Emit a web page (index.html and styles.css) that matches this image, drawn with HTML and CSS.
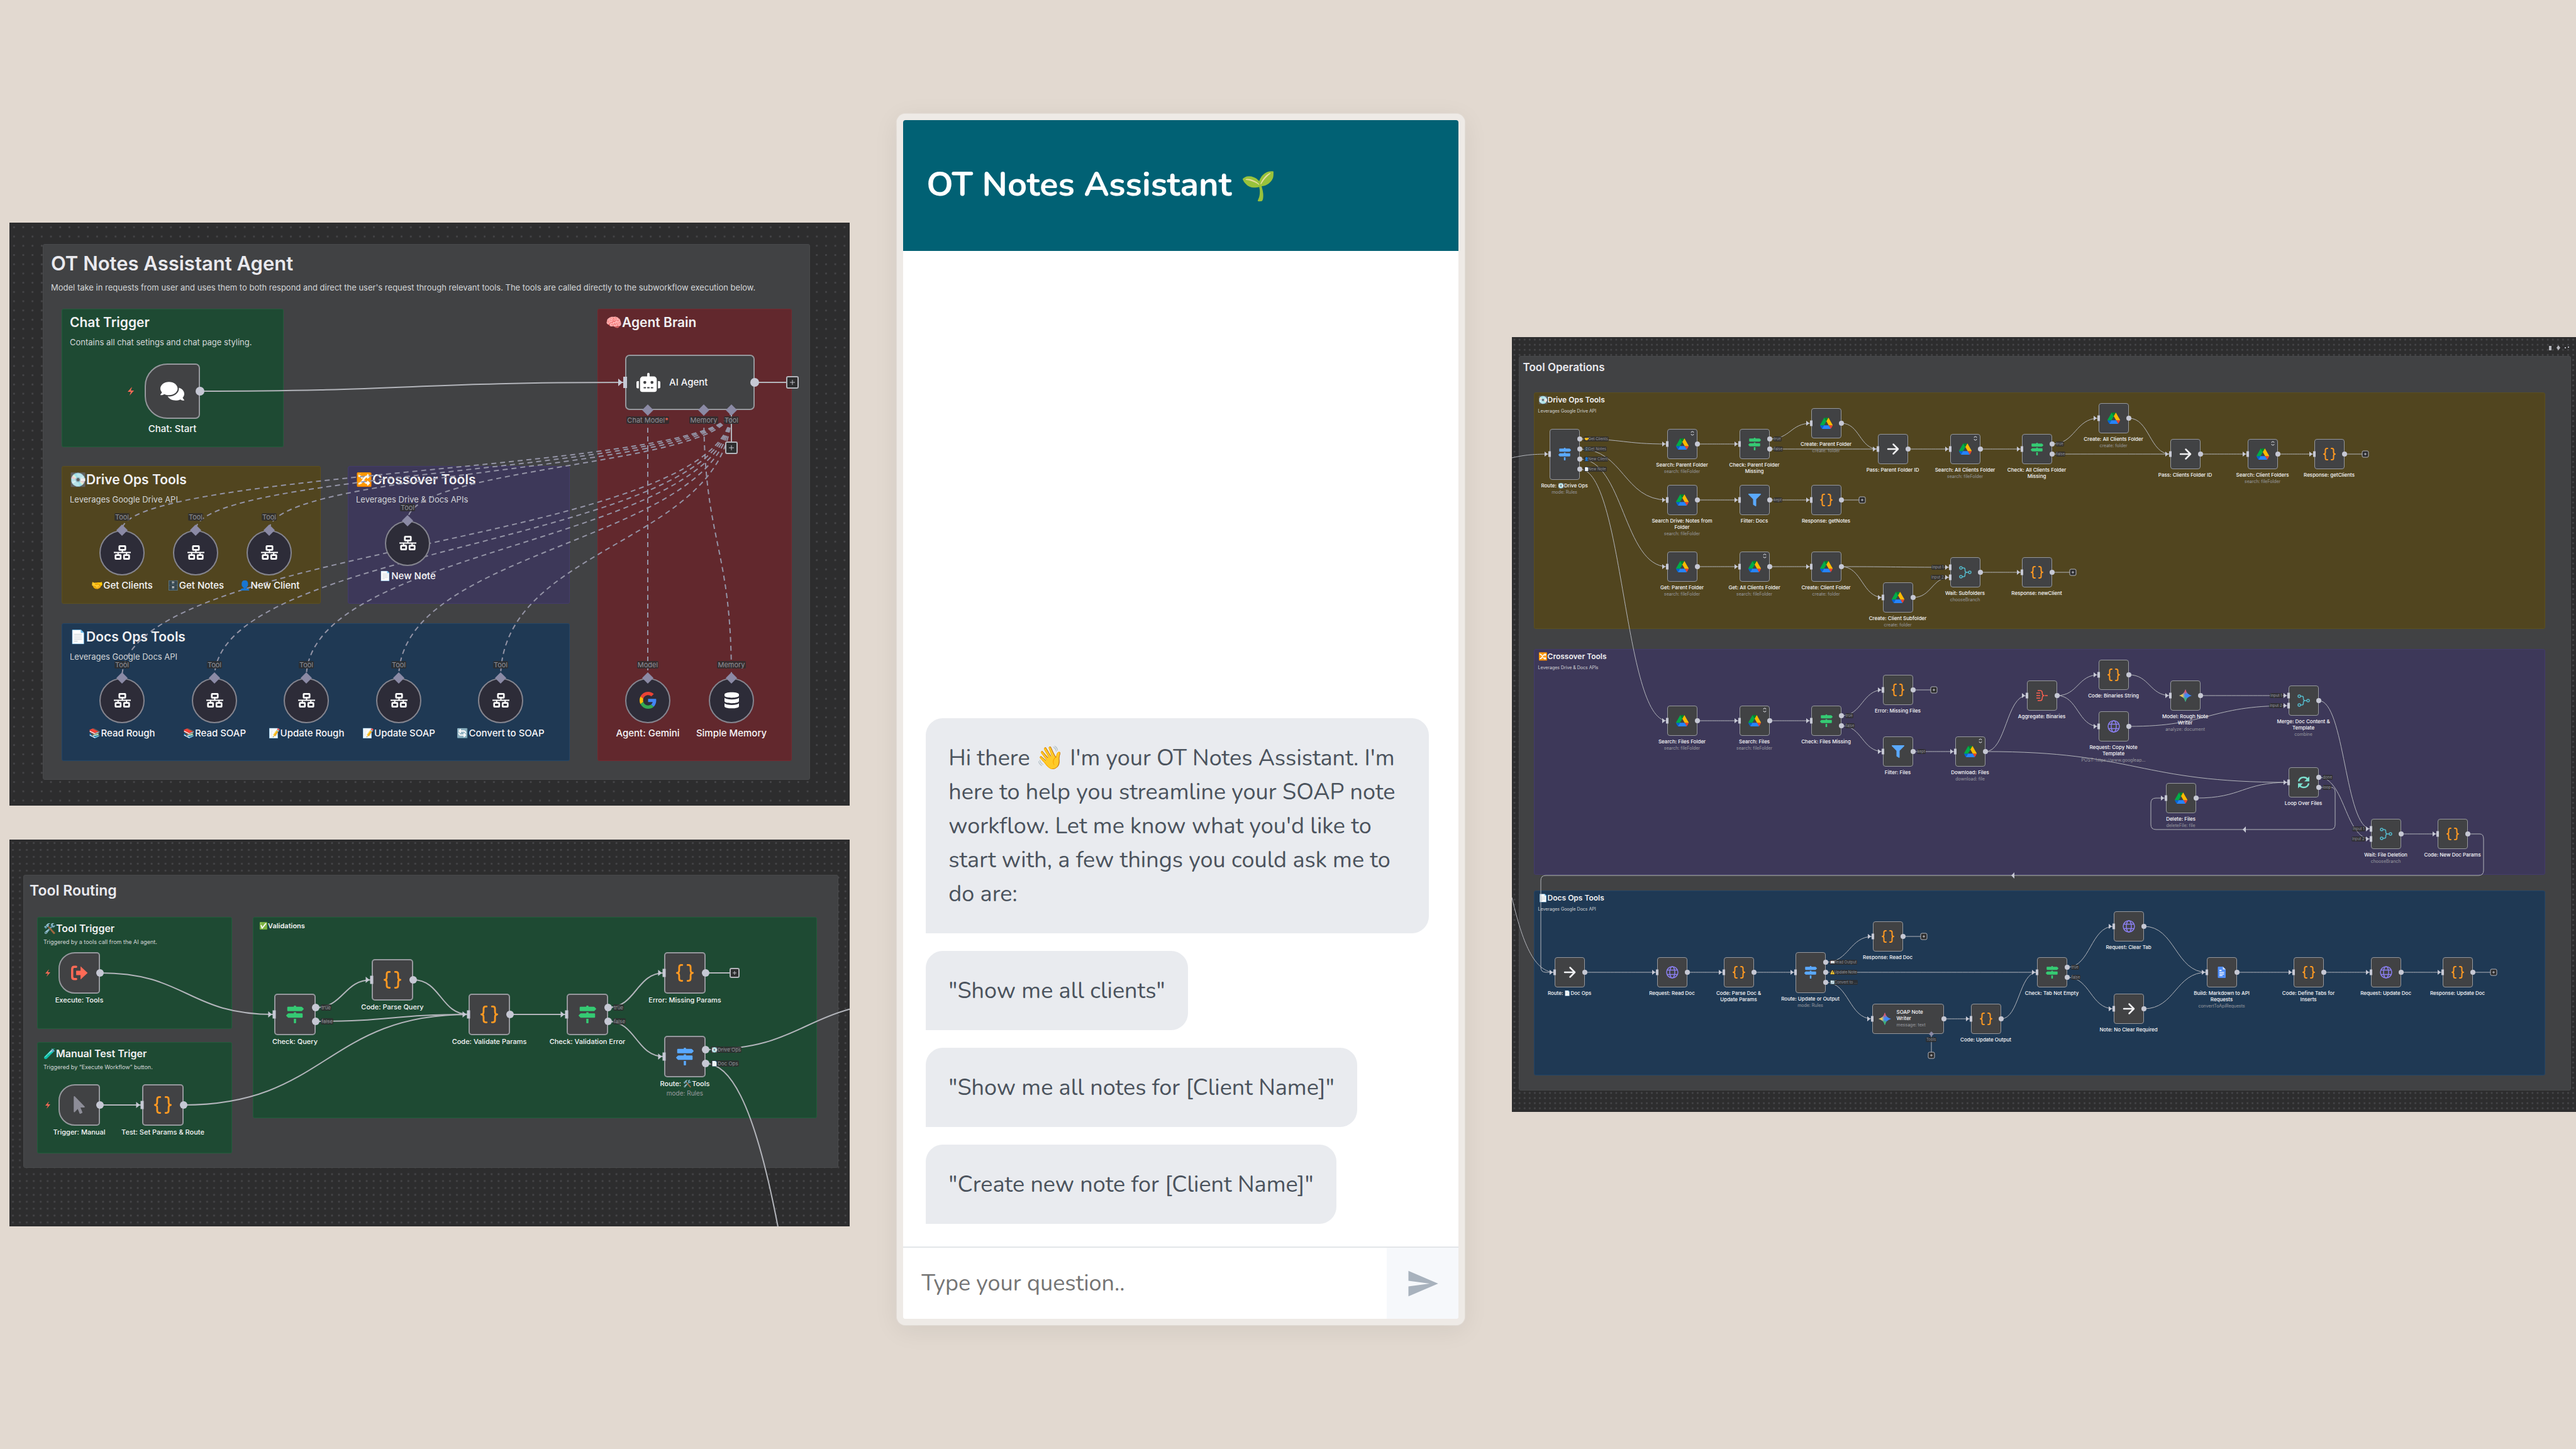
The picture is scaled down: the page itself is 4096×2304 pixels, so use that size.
FILE: index.html
```html
<!DOCTYPE html>
<html lang="en">
<head>
<meta charset="utf-8">
<meta name="viewport" content="width=device-width, initial-scale=1">
<title>OT Notes Assistant</title>
<link rel="stylesheet" href="styles.css">
</head>
<body>
<svg class="sprite" aria-hidden="true">
  <defs>
    <radialGradient id="g-red" gradientUnits="userSpaceOnUse" cx="17" cy="0" r="18"><stop offset=".4" stop-color="#f0525a"/><stop offset="1" stop-color="#f0525a" stop-opacity="0"/></radialGradient>
    <radialGradient id="g-yellow" gradientUnits="userSpaceOnUse" cx="0" cy="20" r="19"><stop offset=".5" stop-color="#f6c945"/><stop offset="1" stop-color="#f6c945" stop-opacity="0"/></radialGradient>
    <radialGradient id="g-green" gradientUnits="userSpaceOnUse" cx="17" cy="40" r="18"><stop offset=".5" stop-color="#3fb668"/><stop offset="1" stop-color="#3fb668" stop-opacity="0"/></radialGradient>
  </defs>
  <symbol id="i-drive" viewBox="0 -4 87 86">
    <path d="m6.6 66.85 3.85 6.65c.8 1.4 1.95 2.5 3.3 3.3l13.75-23.8h-27.5c0 1.55.4 3.1 1.2 4.5z" fill="#0066da"/>
    <path d="m43.65 25-13.75-23.8c-1.35.8-2.5 1.9-3.3 3.3l-25.4 44a9.06 9.06 0 0 0-1.2 4.5h27.5z" fill="#00ac47"/>
    <path d="m73.55 76.8c1.35-.8 2.5-1.9 3.3-3.3l1.6-2.75 7.65-13.25c.8-1.4 1.2-2.95 1.2-4.5h-27.5l5.85 11.5z" fill="#ea4335"/>
    <path d="m43.65 25 13.75-23.8c-1.35-.8-2.9-1.2-4.5-1.2h-18.5c-1.6 0-3.15.45-4.5 1.2z" fill="#00832d"/>
    <path d="m59.8 53h-32.3l-13.75 23.8c1.35.8 2.9 1.2 4.5 1.2h50.8c1.6 0 3.15-.45 4.5-1.2z" fill="#2684fc"/>
    <path d="m73.4 26.5-12.7-22c-.8-1.4-1.95-2.5-3.3-3.3l-13.75 23.8 16.15 28h27.45c0-1.55-.4-3.1-1.2-4.5z" fill="#ffba00"/>
  </symbol>
  <symbol id="i-signs" viewBox="0 0 512 512"><path fill="currentColor" d="M507.31 84.69L464 41.37c-6-6-14.14-9.37-22.63-9.37H288V16c0-8.84-7.16-16-16-16h-32c-8.84 0-16 7.16-16 16v16H56c-13.25 0-24 10.75-24 24v80c0 13.25 10.75 24 24 24h385.37c8.49 0 16.62-3.37 22.63-9.37l43.31-43.31c6.25-6.26 6.25-16.38 0-22.63zM224 496c0 8.84 7.16 16 16 16h32c8.84 0 16-7.16 16-16V384h-64v112zm232-272H288v-32h-64v32H70.63c-8.49 0-16.62 3.37-22.63 9.37L4.69 276.69c-6.25 6.25-6.25 16.38 0 22.63L48 342.63c6 6 14.14 9.37 22.63 9.37H456c13.25 0 24-10.75 24-24v-80c0-13.25-10.75-24-24-24z"/></symbol>
  <symbol id="i-filter" viewBox="0 0 512 512"><path fill="#5aa9ff" d="M487.976 0H24.028C2.71 0-8.047 25.866 7.058 40.971L192 225.941V432c0 7.831 3.821 15.17 10.237 19.662l80 55.98C298.02 518.69 320 507.493 320 487.98V225.941l184.947-184.97C520.021 25.896 509.338 0 487.976 0z"/></symbol>
  <symbol id="i-code" viewBox="0 0 40 40"><path fill="none" stroke="#ff9922" stroke-width="4" stroke-linecap="round" stroke-linejoin="round" d="M14 2h-2q-5 0-5 5v7q0 6-5 6 5 0 5 6v7q0 5 5 5h2M26 2h2q5 0 5 5v7q0 6 5 6-5 0-5 6v7q0 5-5 5h-2"/></symbol>
  <symbol id="i-arrow" viewBox="0 0 40 40"><path fill="none" stroke="#f2f2f4" stroke-width="5" stroke-linecap="round" stroke-linejoin="round" d="M4 20h31M21 5l15 15-15 15"/></symbol>
  <symbol id="i-merge" viewBox="0 0 40 40"><g fill="none" stroke="#54b8c9" stroke-width="3"><circle cx="6" cy="6" r="4"/><circle cx="6" cy="34" r="4"/><circle cx="34" cy="20" r="4"/><path d="M10 6h4q5 0 5 5v3q0 6 6 6h5M10 34h4q5 0 5-5v-3q0-6 6-6"/></g></symbol>
  <symbol id="i-globe" viewBox="0 0 40 40"><g fill="none" stroke="#8a7ff0" stroke-width="3"><circle cx="20" cy="20" r="18"/><ellipse cx="20" cy="20" rx="8" ry="18"/><path d="M4 13h32M4 27h32"/></g></symbol>
  <symbol id="i-gemini" viewBox="0 0 40 40"><path fill="#4187f5" d="M20 0Q24 16 40 20 24 24 20 40 16 24 0 20 16 16 20 0Z"/><path fill="url(#g-red)" d="M20 0Q24 16 40 20 24 24 20 40 16 24 0 20 16 16 20 0Z"/><path fill="url(#g-green)" d="M20 0Q24 16 40 20 24 24 20 40 16 24 0 20 16 16 20 0Z"/><path fill="url(#g-yellow)" d="M20 0Q24 16 40 20 24 24 20 40 16 24 0 20 16 16 20 0Z"/></symbol>
  <symbol id="i-docs" viewBox="0 0 40 40"><path fill="#4f8df7" d="M9 2h14l9 9v25q0 2-2 2H9q-2 0-2-2V4q0-2 2-2z"/><path fill="#cfe0ff" d="M23 2l9 9h-9z"/><path fill="#e8f0ff" d="M12 12h7v4h-7zM12 19h15v3H12zM12 24h15v3H12zM12 29h10v3H12z"/></symbol>
  <symbol id="i-aggregate" viewBox="0 0 40 40"><path fill="none" stroke="#ff6150" stroke-width="3" stroke-linejoin="round" d="M6 4h9q4 0 5 4l1 7q1 5 5 5-4 0-5 5l-1 7q-1 4-5 4H6M2 12h12M2 20h12M2 28h12M29 20h9"/></symbol>
  <symbol id="i-loop" viewBox="0 0 40 40"><path fill="none" stroke="#7de0cf" stroke-width="5" d="M4 17C6 8 13 4 20 4q8 0 13 6M36 23c-2 9-9 13-16 13q-8 0-13-6"/><path fill="#7de0cf" d="M38 1v16H22zM2 39V23h16z"/></symbol>
  <symbol id="i-exit" viewBox="0 0 40 40"><path fill="none" stroke="#ff6a56" stroke-width="5" stroke-linecap="round" d="M13 6h-4q-5 0-5 5v18q0 5 5 5h4"/><path fill="#ff6a56" d="M13 15h10V5l16 15-16 15V25H13z"/></symbol>
  <symbol id="i-pointer" viewBox="-96 0 512 512"><path fill="#8d8d98" d="M302.189 329.126H196.105l55.831 135.993c3.889 9.428-.555 19.999-9.444 23.999l-49.165 21.427c-9.165 4-19.443-.571-23.332-9.714l-53.053-129.136-86.664 89.138C18.729 472.71 0 463.554 0 447.977V18.299C0 1.899 19.921-6.096 30.277 5.443l284.412 292.542c11.472 11.179 3.007 31.141-12.5 31.141z"/></symbol>
  <symbol id="i-chat" viewBox="0 -32 576 576"><path fill="#fff" d="M416 192c0-88.4-93.1-160-208-160S0 103.6 0 192c0 34.3 14.1 65.9 38 92-13.4 30.2-35.5 54.2-35.8 54.5-2.2 2.3-2.8 5.7-1.5 8.7S4.8 352 8 352c36.6 0 66.9-12.3 88.7-25 32.2 15.7 70.3 25 111.3 25 114.9 0 208-71.6 208-160zm122 220c23.9-26 38-57.7 38-92 0-66.9-53.5-124.2-129.3-148.1.9 6.6 1.3 13.3 1.3 20.1 0 105.9-107.7 192-240 192-10.8 0-21.3-.8-31.7-1.9C207.8 439.6 281.8 480 368 480c41 0 79.1-9.2 111.3-25 21.8 12.7 52.1 25 88.7 25 3.2 0 6.1-1.9 7.3-4.8 1.3-2.9.7-6.3-1.5-8.7-.3-.3-22.4-24.2-35.8-54.5z"/></symbol>
  <symbol id="i-robot" viewBox="0 -32 640 576"><path fill="#fff" d="M32,224H64V416H32A32,32,0,0,1,0,384V256A32,32,0,0,1,32,224Zm512-48V448a64,64,0,0,1-64,64H160a64,64,0,0,1-64-64V176a80,80,0,0,1,80-80H288V32a32,32,0,0,1,64,0V96H464A80,80,0,0,1,544,176ZM264,256a40,40,0,1,0-40,40A40,40,0,0,0,264,256Zm-8,128H192v32h64Zm96,0H288v32h64ZM456,256a40,40,0,1,0-40,40A40,40,0,0,0,456,256Zm-8,128H384v32h64ZM640,256V384a32,32,0,0,1-32,32H576V224h32A32,32,0,0,1,640,256Z"/></symbol>
  <symbol id="i-tool" viewBox="0 0 40 40"><g fill="none" stroke="#fff" stroke-width="4"><rect x="13" y="5" width="14" height="9" rx="1"/><rect x="4" y="26" width="12" height="9" rx="1"/><rect x="24" y="26" width="12" height="9" rx="1"/><path stroke-width="3" d="M0 20h40M20 14v6M10 20v6M30 20v6"/></g></symbol>
  <symbol id="i-google" viewBox="0 0 48 48"><path fill="#EA4335" d="M24 9.5c3.54 0 6.71 1.22 9.21 3.6l6.85-6.85C35.9 2.38 30.47 0 24 0 14.62 0 6.51 5.38 2.56 13.22l7.98 6.19C12.43 13.72 17.74 9.5 24 9.5z"/><path fill="#4285F4" d="M46.98 24.55c0-1.57-.15-3.09-.38-4.55H24v9.02h12.94c-.58 2.96-2.26 5.48-4.78 7.18l7.73 6c4.51-4.18 7.09-10.36 7.09-17.65z"/><path fill="#FBBC05" d="M10.53 28.59c-.48-1.45-.76-2.99-.76-4.59s.27-3.14.76-4.59l-7.98-6.19C.92 16.46 0 20.12 0 24c0 3.88.92 7.54 2.56 10.78l7.97-6.19z"/><path fill="#34A853" d="M24 48c6.48 0 11.93-2.13 15.89-5.81l-7.73-6c-2.15 1.45-4.92 2.3-8.16 2.3-6.26 0-11.57-4.22-13.47-9.91l-7.98 6.19C6.51 42.62 14.62 48 24 48z"/></symbol>
  <symbol id="i-db" viewBox="0 0 40 40"><path fill="#fff" d="M20 1c10 0 17 2 17 5v3c0 3-7 5-17 5S3 12 3 9V6c0-3 7-5 17-5zM3 14c3 3 9 4 17 4s14-1 17-4v8c0 3-7 5-17 5S3 25 3 22zM3 27c3 3 9 4 17 4s14-1 17-4v7c0 3-7 5-17 5S3 37 3 34z"/></symbol>
</svg>

<main class="board">
  <div class="stack">
    <section class="canvas canvas-agent" id="agent" aria-label="OT Notes Assistant Agent workflow"></section>
    <section class="canvas canvas-routing" id="routing" aria-label="Tool Routing workflow"></section>
  </div>

  <section class="chat" aria-label="Chat">
    <header class="chat-header"><h1>OT Notes Assistant <span class="emoji">🌱</span></h1></header>
    <div class="messages">
      <p class="bubble">Hi there 👋 I'm your OT Notes Assistant. I'm here to help you streamline your SOAP note workflow. Let me know what you'd like to start with, a few things you could ask me to do are:</p>
      <p class="bubble">"Show me all clients"</p>
      <p class="bubble">"Show me all notes for [Client Name]"</p>
      <p class="bubble">"Create new note for [Client Name]"</p>
    </div>
    <form class="composer">
      <input type="text" placeholder="Type your question.." aria-label="Type your question">
      <button type="button" aria-label="Send"><svg viewBox="0 0 24 24"><path fill="currentColor" d="M2 21 23 12 2 3v7l15 2-15 2z"/></svg></button>
    </form>
  </section>

  <section class="canvas canvas-operations" id="operations" aria-label="Tool Operations workflow"></section>
</main>
<script src="workflow.js"></script>
</body>
</html>
```
FILE: styles.css
```css
* { box-sizing: border-box; }

body {
  margin: 0;
  min-height: 100vh;
  background: #e2d9d0;
  font-family: Inter, "Liberation Sans", sans-serif;
}

h1, h2, p { margin: 0; }

.sprite { position: absolute; width: 0; height: 0; }

.board {
  min-height: 100vh;
  display: grid;
  grid-template-columns: minmax(0, 1336fr) minmax(0, 902fr) minmax(0, 1692fr);
  gap: 75px;
  align-items: center;
  padding-left: 15px;
}

.stack { display: grid; gap: 54px; }

/* Workflow canvases */
.canvas {
  position: relative;
  overflow: hidden;
  background-color: #2d2d2e;
  background-image: radial-gradient(circle, #464649 1px, transparent 2px);
}

.canvas-agent {
  aspect-ratio: 1336 / 927;
  background-size: calc(100% / 91) calc(100% / 63);
  --title: 31px; --title-line: 40px; --title-top: 10px; --title-gap: 9px;
  --head: 21px; --head-line: 26px; --head-top: 8px; --head-gap: 9px;
  --note: 13px; --note-line: 18px; --inset: 12px;
  --name: 15px; --name-line: 20px; --name-gap: 6px;
  --sub: 13px; --sub-line: 16px;
  --port: 11px; --port-line: 12px;
  --radius: 7px; --round: 36px; --icon: 38px; --stroke: 2px;
}

.canvas-routing {
  aspect-ratio: 1336 / 615;
  background-size: calc(100% / 121) calc(100% / 56);
  --title: 23px; --title-line: 30px; --title-top: 9px; --title-gap: 6px;
  --head: 16px; --head-line: 20px; --head-top: 7px; --head-gap: 6px;
  --note: 9px; --note-line: 12px; --inset: 9px;
  --name: 11px; --name-line: 15px; --name-gap: 3px;
  --sub: 10px; --sub-line: 15px;
  --port: 8px; --port-line: 10px;
  --radius: 5px; --round: 26px; --icon: 28px; --stroke: 2px;
}

.canvas-operations {
  aspect-ratio: 1691 / 1231;
  background-size: calc(100% / 209) calc(100% / 152);
  --title: 17px; --title-line: 22px; --title-top: 6px; --title-gap: 4px;
  --head: 12px; --head-line: 14px; --head-top: 4px; --head-gap: 6px;
  --note: 7px; --note-line: 9px; --inset: 6px;
  --name: 8px; --name-line: 10px; --name-gap: 4px;
  --sub: 7px; --sub-line: 11px;
  --port: 6px; --port-line: 8px;
  --radius: 4px; --round: 20px; --icon: 20px; --stroke: 1px;
}

.sticky {
  position: absolute;
  padding: var(--head-top) var(--inset);
  border: 1px solid transparent;
  border-radius: 3px;
  color: #f0f0f2;
  white-space: nowrap;
}
.sticky h2 { font-size: var(--head); line-height: var(--head-line); font-weight: 600; }
.sticky p { margin-top: var(--head-gap); font-size: var(--note); line-height: var(--note-line); color: #d4d6d8; }
.sticky-main { padding-top: var(--title-top); background: #414244; border-color: #48494b; }
.sticky-main h2 { font-size: var(--title); line-height: var(--title-line); color: #e9e9ee; }
.sticky-main p { margin-top: var(--title-gap); }
.sticky-small h2 { font-size: 11px; line-height: 12px; }
.green { background: #1e4a33; border-color: #225c3b; }
.yellow { background: #51451f; border-color: #5c4f1d; }
.purple { background: #3d3859; border-color: #433b6c; }
.blue { background: #1f3954; border-color: #234567; }
.red { background: #62282d; border-color: #73292f; }

.layer { position: absolute; inset: 0; width: 100%; height: 100%; overflow: visible; pointer-events: none; }

.edge { fill: none; stroke: #b3b5bb; stroke-width: var(--stroke); }
.edge-dashed { stroke: #9494a6; stroke-dasharray: 8 6; }
.dot, .arrow, .slot { fill: #c6c8d4; }
.diamond { fill: #8b8aa5; }
.plus-box { fill: #2d2d2e; stroke: #b4b5bb; stroke-width: var(--stroke); }
.plus-mark { fill: none; stroke: #c2c3ca; stroke-width: 1px; }
.bolt { fill: #ff6a56; }
.mark { fill: #b4b5bb; }

.node {
  position: absolute;
  display: flex;
  flex-direction: column;
  align-items: center;
  text-align: center;
  white-space: nowrap;
  color: #f6f6f8;
}
.node-box {
  position: relative;
  flex: none;
  display: flex;
  align-items: center;
  justify-content: center;
  background: #414244;
  border: var(--stroke) solid #96989d;
  border-radius: var(--radius);
}
.node-box svg { width: var(--icon); height: var(--icon); flex: none; }
.node-box .badge { position: absolute; top: 2px; right: 3px; width: 8px; height: 8px; }
.node-trigger .node-box { border-radius: var(--round) var(--radius) var(--radius) var(--round); }
.node-tool .node-box { border-radius: 50%; background: #2d2c38; border-color: #85858f; }
.node-tool .node-box svg { width: 27px; height: 27px; }
.node-name { margin-top: var(--name-gap); font-size: var(--name); line-height: var(--name-line); font-weight: 500; }
.node-sub { font-size: var(--sub); line-height: var(--sub-line); color: #9a9ba0; }
.node-wide .node-box { justify-content: flex-start; text-align: left; padding-left: 16px; gap: 14px; }
.canvas-operations .node-wide .node-box { padding-left: 9px; gap: 9px; }
.node-wide .node-name { margin-top: 0; }
.tone-green { color: #35ca73; }
.tone-blue { color: #5aa9ff; }

.port { position: absolute; width: 120px; display: flex; font-size: var(--port); line-height: var(--port-line); color: #8f9097; white-space: nowrap; }
.port span { background: #2d2d2ed0; border-radius: 2px; padding: 0 1px; }
.port-in { justify-content: flex-end; }
.port-mid { justify-content: center; }
.port b { color: #ff6a56; font-weight: 400; }

/* Chat */
.chat {
  aspect-ratio: 902 / 1926;
  margin-bottom: 16px;
  display: flex;
  flex-direction: column;
  border: 10px solid #eeeae6;
  border-radius: 14px;
  background: #fff;
  box-shadow: 0 8px 40px #00000012, 0 0 2px #fff;
  font-family: Nunito, Lato, "Liberation Sans", sans-serif;
  overflow: hidden;
}
.chat-header {
  height: 208px;
  display: flex;
  align-items: center;
  padding: 0 37px;
  background: #016174;
  color: #fff;
}
.chat-header h1 { font-size: 54px; line-height: 72px; font-weight: 700; }
.chat-header .emoji { font-size: 45px; }
.messages {
  flex: 1;
  display: flex;
  flex-direction: column;
  justify-content: flex-end;
  align-items: flex-start;
  gap: 28px;
  padding: 36px;
}
.bubble {
  max-width: 800px;
  padding: 37px 36px 35px;
  border-radius: 27px 27px 27px 0;
  background: #e9ebef;
  color: #4b535d;
  font-size: 36px;
  line-height: 54px;
}
.composer { display: flex; height: 115px; border-top: 2px solid #e3e6e9; }
.composer input { flex: 1; min-width: 0; border: 0; padding: 0 29px; font: 36px/54px Nunito, Lato, "Liberation Sans", sans-serif; background: #fff; }
.composer input::placeholder { color: #757575; opacity: 1; }
.composer button { width: 114px; border: 0; padding: 0; background: #f6f8fb; color: #a8b2bd; display: flex; align-items: center; justify-content: center; }
.composer svg { width: 54px; height: 54px; }
```
FILE: workflow.js
```js
// Draws each workflow canvas from its list of notes, nodes and links.
const node = (id, x, y, icon, name, extra = {}) => ({ id, x, y, icon, name, ...extra });

const tf = ["true", "false"];
const inputs = ["Input 1", "Input 2"];

const canvases = {
  agent: {
    size: 88, pitch: 28, dot: 7, slot: [6, 18], plus: 18, tail: 60,
    notes: [
      [53, 34, 1220, 852, "main", "OT Notes Assistant Agent", "Model take in requests from user and uses them to both respond and direct the user's request through relevant tools. The tools are called directly to the subworkflow execution below."],
      [83, 137, 353, 220, "green", "Chat Trigger", "Contains all chat setings and chat page styling."],
      [83, 387, 412, 219, "yellow", "💽Drive Ops Tools", "Leverages Google Drive API"],
      [538, 387, 353, 219, "purple", "🔀Crossover Tools", "Leverages Drive &amp; Docs APIs"],
      [83, 637, 808, 219, "blue", "📄Docs Ops Tools", "Leverages Google Docs API"],
      [935, 137, 309, 719, "red", "🧠Agent Brain"]
    ],
    nodes: [
      node("start", 259, 268, "chat", "Chat: Start", { kind: "trigger" }),
      node("ai", 1082, 254, "robot", "AI Agent", { kind: "wide", w: 206, ins: [""], plus: true, bottom: [[-67, "Chat Model<b>*</b>"], [22, "Memory"], [66, "Tool"]] }),
      node("t1", 179, 525, "tool", "🤝Get Clients", { kind: "tool", top: "Tool" }),
      node("t2", 296, 525, "tool", "🗄️Get Notes", { kind: "tool", top: "Tool" }),
      node("t3", 413, 525, "tool", "👤New Client", { kind: "tool", top: "Tool" }),
      node("t4", 633, 510, "tool", "📄New Note", { kind: "tool", top: "Tool" }),
      node("t5", 179, 760, "tool", "📚Read Rough", { kind: "tool", top: "Tool" }),
      node("t6", 326, 760, "tool", "📚Read SOAP", { kind: "tool", top: "Tool" }),
      node("t7", 472, 760, "tool", "📝Update Rough", { kind: "tool", top: "Tool" }),
      node("t8", 619, 760, "tool", "📝Update SOAP", { kind: "tool", top: "Tool" }),
      node("t9", 781, 760, "tool", "🔄Convert to SOAP", { kind: "tool", top: "Tool" }),
      node("gemini", 1015, 760, "google", "Agent: Gemini", { kind: "tool", top: "Model" }),
      node("memory", 1148, 760, "db", "Simple Memory", { kind: "tool", top: "Memory" })
    ],
    links: [["start", 0, "ai", 0]],
    drops: [[0, "gemini"], [1, "memory"], [2, "t1"], [2, "t2"], [2, "t3"], [2, "t4"], [2, "t5"], [2, "t6"], [2, "t7"], [2, "t8"], [2, "t9"]],
    dropFrom: "ai", dropPlus: [1148, 358]
  },

  routing: {
    size: 66, pitch: 22, dot: 6, slot: [5, 13], plus: 14, tail: 46,
    notes: [
      [22, 56, 1296, 466, "main", "Tool Routing"],
      [44, 123, 310, 178, "green", "🛠️Tool Trigger", "Triggered by a tools call from the AI agent."],
      [44, 322, 310, 177, "green", "🧪Manual Test Triger", "Triggered by “Execute Workflow” button."],
      [387, 123, 897, 320, "green small", "✅Validations"]
    ],
    nodes: [
      node("exec", 111, 212, "exit", "Execute: Tools", { kind: "trigger" }),
      node("manual", 111, 422, "pointer", "Trigger: Manual", { kind: "trigger" }),
      node("params", 244, 422, "code", "Test: Set Params &amp; Route", { ins: [""] }),
      node("query", 454, 278, "signs", "Check: Query", { tone: "green", ins: [""], outs: tf }),
      node("parse", 609, 223, "code", "Code: Parse Query", { ins: [""] }),
      node("validate", 763, 278, "code", "Code: Validate Params", { ins: [""] }),
      node("check", 919, 278, "signs", "Check: Validation Error", { tone: "green", ins: [""], outs: tf }),
      node("missing", 1074, 212, "code", "Error: Missing Params", { ins: [""], plus: true }),
      node("route", 1074, 345, "signs", "Route: 🛠️Tools", { tone: "blue", ins: [""], sub: "mode: Rules", outs: ["💽Drive Ops", "📄Doc Ops"] })
    ],
    links: [["exec", 0, "query", 0], ["manual", 0, "params", 0], ["params", 0, "validate", 0], ["query", 0, "parse", 0], ["query", 1, "validate", 0], ["parse", 0, "validate", 0], ["validate", 0, "check", 0], ["check", 0, "missing", 0], ["check", 1, "route", 0]],
    paths: ["M1107 334C1267 334 1267 259 1427 259", "M1107 356C1275 356 1275 1556 1444 1556"]
  },

  operations: {
    size: 48, pitch: 16, dot: 4, slot: [4, 9], plus: 10, tail: 33,
    notes: [
      [11, 30, 1673, 1168, "main", "Tool Operations"],
      [35, 88, 1608, 376, "yellow", "💽Drive Ops Tools", "Leverages Google Drive API"],
      [35, 496, 1608, 359, "purple", "🔀Crossover Tools", "Leverages Drive &amp; Docs APIs"],
      [35, 880, 1608, 294, "blue", "📄Docs Ops Tools", "Leverages Google Docs API"]
    ],
    nodes: [
      node("rd", 84, 186, "signs", "Route: 💽Drive Ops", { tone: "blue", h: 81, ins: [""], sub: "mode: Rules", outs: ["🤝Get Clients", "🗄️Get Notes", "👤New Client", "📄New Note"] }),
      node("sp", 271, 170, "drive", "Search: Parent Folder", { ins: [""], sub: "search: fileFolder", badge: true }),
      node("cp", 386, 170, "signs", "Check: Parent Folder<br>Missing", { tone: "green", ins: [""], outs: tf }),
      node("mp", 500, 137, "drive", "Create: Parent Folder", { ins: [""], sub: "create: folder" }),
      node("pp", 606, 178, "arrow", "Pass: Parent Folder ID", { ins: [""] }),
      node("sa", 721, 178, "drive", "Search: All Clients Folder", { ins: [""], sub: "search: fileFolder", badge: true }),
      node("ca", 835, 178, "signs", "Check: All Clients Folder<br>Missing", { tone: "green", ins: [""], outs: tf }),
      node("ma", 957, 129, "drive", "Create: All Clients Folder", { ins: [""], sub: "create: folder" }),
      node("pa", 1071, 186, "arrow", "Pass: Clients Folder ID", { ins: [""] }),
      node("sc", 1194, 186, "drive", "Search: Client Folders", { ins: [""], sub: "search: fileFolder", badge: true }),
      node("rc", 1300, 186, "code", "Response: getClients", { ins: [""], plus: true }),
      node("sn", 271, 259, "drive", "Search Drive: Notes from<br>Folder", { ins: [""], sub: "search: fileFolder" }),
      node("fd", 386, 259, "filter", "Filter: Docs", { ins: [""], outs: ["kept"] }),
      node("rn", 500, 259, "code", "Response: getNotes", { ins: [""], plus: true }),
      node("gp", 271, 365, "drive", "Get: Parent Folder", { ins: [""], sub: "search: fileFolder" }),
      node("ga", 386, 365, "drive", "Get: All Clients Folder", { ins: [""], sub: "search: fileFolder", badge: true }),
      node("mc", 500, 365, "drive", "Create: Client Folder", { ins: [""], sub: "create: folder" }),
      node("ms", 614, 414, "drive", "Create: Client Subfolder", { ins: [""], sub: "create: folder" }),
      node("ws", 721, 374, "merge", "Wait: Subfolders", { ins: inputs, sub: "chooseBranch" }),
      node("rw", 835, 374, "code", "Response: newClient", { ins: [""], plus: true }),

      node("sf", 271, 610, "drive", "Search: Files Folder", { ins: [""], sub: "search: fileFolder" }),
      node("ss", 386, 610, "drive", "Search: Files", { ins: [""], sub: "search: fileFolder", badge: true }),
      node("cf", 500, 610, "signs", "Check: Files Missing", { tone: "green", ins: [""], outs: tf }),
      node("em", 614, 561, "code", "Error: Missing Files", { ins: [""], plus: true }),
      node("ff", 614, 659, "filter", "Filter: Files", { ins: [""], outs: ["kept"] }),
      node("df", 729, 659, "drive", "Download: Files", { ins: [""], sub: "download: file", badge: true }),
      node("ab", 843, 570, "aggregate", "Aggregate: Binaries", { ins: [""] }),
      node("cb", 957, 537, "code", "Code: Binaries String", { ins: [""] }),
      node("rt", 957, 619, "globe", "Request: Copy Note<br>Template", { ins: [""], sub: "POST: https://www.googleap..." }),
      node("mr", 1071, 570, "gemini", "Model: Rough Note<br>Writer", { ins: [""], sub: "analyze: document" }),
      node("me", 1259, 578, "merge", "Merge: Doc Content &amp;<br>Template", { ins: inputs, sub: "combine" }),
      node("lo", 1259, 708, "loop", "Loop Over Files", { ins: [""], outs: ["done", "loop"] }),
      node("de", 1064, 733, "drive", "Delete: Files", { ins: [""], sub: "deleteFile: file" }),
      node("wf", 1390, 790, "merge", "Wait: File Deletion", { ins: inputs, sub: "chooseBranch" }),
      node("cn", 1496, 790, "code", "Code: New Doc Params", { ins: [""] }),

      node("ro", 92, 1010, "arrow", "Route: 📄Doc Ops", { ins: [""] }),
      node("rr", 255, 1010, "globe", "Request: Read Doc", { ins: [""] }),
      node("cd", 361, 1010, "code", "Code: Parse Doc &amp;<br>Update Params", { ins: [""] }),
      node("ru", 475, 1010, "signs", "Route: Update or Output", { tone: "blue", h: 65, ins: [""], sub: "mode: Rules", outs: ["📖Read Output", "⚠️Update Note", "🔄Convert to ..."] }),
      node("re", 598, 953, "code", "Response: Read Doc", { ins: [""], plus: true }),
      node("so", 630, 1084, "gemini", "SOAP Note<br>Writer", { kind: "wide", w: 114, ins: [""], sub: "message: text", bottom: [[37, "Tools"]] }),
      node("cu", 754, 1084, "code", "Code: Update Output", { ins: [""] }),
      node("ct", 859, 1010, "signs", "Check: Tab Not Empty", { tone: "green", ins: [""], outs: tf }),
      node("rl", 981, 937, "globe", "Request: Clear Tab", { ins: [""] }),
      node("nn", 981, 1068, "arrow", "Note: No Clear Required", { ins: [""] }),
      node("bm", 1129, 1010, "docs", "Build: Markdown to API<br>Requests", { ins: [""], sub: "convertToApiRequests" }),
      node("cx", 1267, 1010, "code", "Code: Define Tabs for<br>Inserts", { ins: [""] }),
      node("rq", 1390, 1010, "globe", "Request: Update Doc", { ins: [""] }),
      node("rz", 1504, 1010, "code", "Response: Update Doc", { ins: [""], plus: true })
    ],
    links: [
      ["rd", 0, "sp", 0], ["rd", 1, "sn", 0], ["rd", 2, "gp", 0], ["rd", 3, "sf", 0],
      ["sp", 0, "cp", 0], ["cp", 0, "mp", 0], ["cp", 1, "pp", 0], ["mp", 0, "pp", 0], ["pp", 0, "sa", 0], ["sa", 0, "ca", 0],
      ["ca", 0, "ma", 0], ["ca", 1, "pa", 0], ["ma", 0, "pa", 0], ["pa", 0, "sc", 0], ["sc", 0, "rc", 0],
      ["sn", 0, "fd", 0], ["fd", 0, "rn", 0],
      ["gp", 0, "ga", 0], ["ga", 0, "mc", 0], ["mc", 0, "ws", 0], ["mc", 0, "ms", 0], ["ms", 0, "ws", 1], ["ws", 0, "rw", 0],
      ["sf", 0, "ss", 0], ["ss", 0, "cf", 0], ["cf", 0, "em", 0], ["cf", 1, "ff", 0], ["ff", 0, "df", 0], ["df", 0, "ab", 0], ["df", 0, "lo", 0],
      ["ab", 0, "cb", 0], ["ab", 0, "rt", 0], ["cb", 0, "mr", 0], ["mr", 0, "me", 0], ["rt", 0, "me", 1], ["me", 0, "wf", 0], ["lo", 0, "wf", 1],
      ["de", 0, "lo", 0], ["wf", 0, "cn", 0],
      ["ro", 0, "rr", 0], ["rr", 0, "cd", 0], ["cd", 0, "ru", 0], ["ru", 0, "re", 0], ["ru", 1, "ct", 0], ["ru", 2, "so", 0],
      ["so", 0, "cu", 0], ["cu", 0, "ct", 0], ["ct", 0, "rl", 0], ["ct", 1, "nn", 0], ["rl", 0, "bm", 0], ["nn", 0, "bm", 0],
      ["bm", 0, "cx", 0], ["cx", 0, "rq", 0], ["rq", 0, "rz", 0]
    ],
    paths: [
      "M0 192C18 188 30 186 60 186",
      "M0 891C14 950 32 1010 68 1010",
      "M1283 716H1303Q1309 716 1309 724V775Q1309 783 1301 783H1024Q1016 783 1016 775V741Q1016 733 1024 733H1040",
      "M1520 790H1539Q1545 790 1545 798V848Q1545 856 1537 856H54Q46 856 46 864V1002Q46 1010 54 1010H68"
    ],
    dropFrom: "so", dropPlus: [667, 1142],
    extra: '<path class="arrow" d="M1162 783l5-5v10zM794 856l5-5v10z"/><path class="mark" d="M1649 14h4v7h-4zM1664 13l3 4-3 4-3-4zM1674 16h2v2h-2zM1679 15h2v2h-2z"/>'
  }
};

function draw(id, c) {
  const byId = Object.fromEntries(c.nodes.map(n => [n.id, n]));
  const width = n => n.w || (n.kind === "tool" ? 72 : c.size);
  const height = n => n.h || (n.kind === "tool" ? 72 : c.size);
  const spread = (n, i, count) => n.y + (i - (count - 1) / 2) * c.pitch;
  const out = (n, i) => [n.x + width(n) / 2, spread(n, i, (n.outs || [""]).length)];
  const inn = (n, i) => [n.x - width(n) / 2, spread(n, i, n.ins.length)];

  let edges = "", ports = "", boxes = "", labels = "";

  for (const [from, o, to, i] of c.links) {
    const [sx, sy] = out(byId[from], o);
    const [tx, ty] = inn(byId[to], i);
    const mx = (sx + tx) / 2;
    edges += `<path class="edge" d="M${sx} ${sy}C${mx} ${sy} ${mx} ${ty} ${tx} ${ty}"/>`;
  }
  for (const d of c.paths || []) edges += `<path class="edge" d="${d}"/>`;
  for (const [slot, to] of c.drops || []) {
    const source = byId[c.dropFrom], target = byId[to];
    const sx = source.x + source.bottom[slot][0], sy = source.y + height(source) / 2;
    const tx = target.x, ty = target.y - 36, my = (sy + ty) / 2;
    edges += `<path class="edge edge-dashed" d="M${sx} ${sy}C${sx} ${my} ${tx} ${my} ${tx} ${ty}"/>`;
  }

  const plus = (x, y) => {
    const h = c.plus / 2, m = Math.round(c.plus / 5);
    ports += `<rect class="plus-box" x="${x - h}" y="${y - h}" width="${c.plus}" height="${c.plus}" rx="2"/><path class="plus-mark" d="M${x - m} ${y}h${2 * m}M${x} ${y - m}v${2 * m}"/>`;
  };
  const diamond = (x, y) => {
    const r = c.dot + (c.dot > 4 ? 2 : 0);
    ports += `<path class="diamond" d="M${x} ${y - r}l${r} ${r}-${r} ${r}-${r}-${r}z"/>`;
  };
  const port = (side, x, y, label) => {
    const half = c.dot > 6 ? 6 : c.dot > 4 ? 5 : 4;
    return `<div class="port port-${side}" style="left:${Math.round(x)}px;top:${Math.round(y - half)}px"><span>${label}</span></div>`;
  };

  if (c.dropPlus) {
    const [x, y] = c.dropPlus, source = byId[c.dropFrom];
    edges += `<path class="edge" d="M${x} ${source.y + height(source) / 2}V${y}"/>`;
    plus(x, y);
  }

  for (const n of c.nodes) {
    const w = width(n), h = height(n), span = 280;
    const tone = n.tone ? ` class="tone-${n.tone}"` : "";
    const icon = `<svg${tone} aria-hidden="true"><use href="#i-${n.icon}"/></svg>`;
    const badge = n.badge ? '<svg class="badge" viewBox="0 0 8 8" aria-hidden="true"><path fill="none" stroke="#d8d9de" d="M2 3a2 2 0 0 1 4 0M6 5a2 2 0 0 1-4 0"/></svg>' : "";
    const text = `<p class="node-name">${n.name}</p>` + (n.sub ? `<p class="node-sub">${n.sub}</p>` : "");
    const inner = n.kind === "wide" ? `${icon}<div>${text}</div>` : icon + badge;
    boxes += `<div class="node node-${n.kind || "step"}" style="left:${n.x - span / 2}px;top:${Math.round(n.y - h / 2)}px;width:${span}px">` +
      `<div class="node-box" style="width:${w}px;height:${h}px">${inner}</div>${n.kind === "wide" ? "" : text}</div>`;

    (n.ins || []).forEach((label, i) => {
      const [x, y] = inn(n, i), [sw, sh] = c.slot;
      ports += `<rect class="slot" x="${x - sw / 2}" y="${y - sh / 2}" width="${sw}" height="${sh}"/><path class="arrow" d="M${x - sw / 2 - 1} ${y}l-${sw + 1}-${sw}v${2 * sw}z"/>`;
      if (label) labels += port("in", x - 9 - 120, y, label);
    });
    if (n.kind !== "tool") {
      (n.outs || [""]).forEach((label, i) => {
        const [x, y] = out(n, i);
        ports += `<circle class="dot" cx="${x}" cy="${y}" r="${c.dot}"/>`;
        if (label) labels += port("out", x + c.dot + 2, y, label);
      });
    }
    if (n.plus) {
      const [x, y] = out(n, 0);
      edges += `<path class="edge" d="M${x} ${y}h${c.tail}"/>`;
      plus(x + c.tail, y);
    }
    if (n.kind === "tool") {
      diamond(n.x, n.y - h / 2);
      labels += port("mid", n.x - 60, n.y - h / 2 - 21, n.top);
    }
    for (const [dx, label] of n.bottom || []) {
      diamond(n.x + dx, n.y + h / 2);
      labels += port("mid", n.x + dx - 60, n.y + h / 2 + (c.dot > 4 ? 16 : 9), label);
    }
    if (n.kind === "trigger") {
      const x = n.x - w / 2 - (c.dot > 6 ? 22 : 17), s = c.dot;
      ports += `<path class="bolt" d="M${x + 2} ${n.y - s}l-${s} ${s + 1}h${s - 2}l-2 ${s - 1} ${s}-${s + 1}h-${s - 2}z"/>`;
    }
  }

  const notes = c.notes.map(([x, y, w, h, tone, head, body]) =>
    `<div class="sticky ${tone === "main" ? "sticky-main" : tone.replace("small", "sticky-small")}" style="left:${x}px;top:${y}px;width:${w}px;height:${h}px"><h2>${head}</h2>${body ? `<p>${body}</p>` : ""}</div>`).join("");

  document.getElementById(id).innerHTML =
    notes + `<svg class="layer" aria-hidden="true">${edges}</svg>` + boxes + labels +
    `<svg class="layer" aria-hidden="true">${ports}${c.extra || ""}</svg>`;
}

for (const [id, c] of Object.entries(canvases)) draw(id, c);
```
